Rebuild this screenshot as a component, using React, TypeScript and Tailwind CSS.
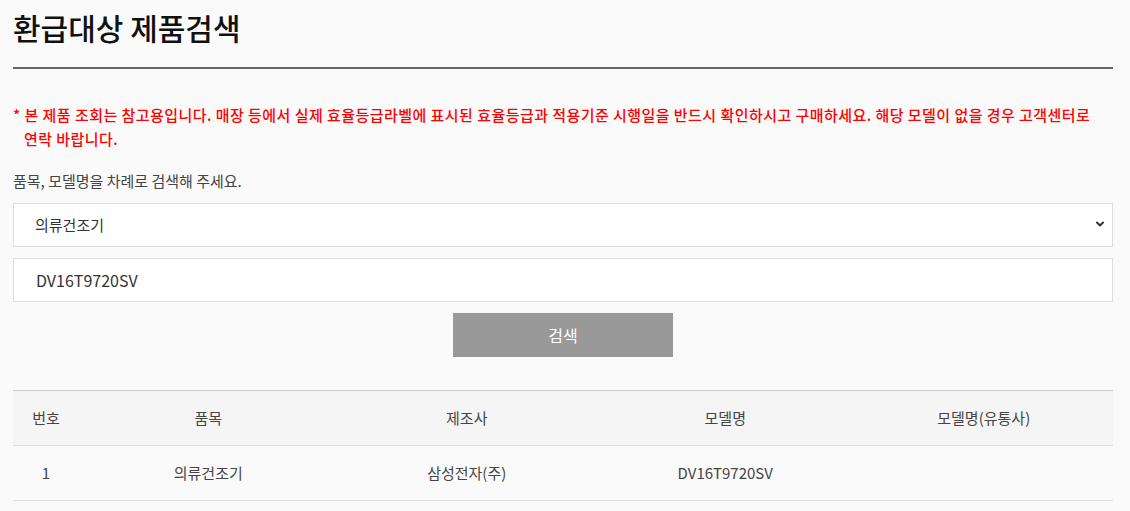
import { ChevronDown } from 'lucide-react';

type Row = {
  no: number;
  category: string;
  maker: string;
  model: string;
  dealerModel: string;
};

const rows: Row[] = [
  { no: 1, category: '의류건조기', maker: '삼성전자(주)', model: 'DV16T9720SV', dealerModel: '' },
];

const font = { fontFamily: '"Noto Sans CJK KR", "Noto Sans", sans-serif' };

const App = () => {
  return (
    <div className="min-h-screen bg-[#fafafa] text-[#333]" style={font}>
      <div className="w-[1100px] ml-[13px]">
        <h1 className="pt-[7px] h-[67px] text-[30px] font-medium text-[#111] leading-[40px]">환급대상 제품검색</h1>
        <div className="h-[2px] bg-[#666]" />

        <p className="mt-[34px] pl-[11px] -indent-[11px] pr-[20px] text-[15px] font-medium tracking-[0.45px] leading-[24px] text-[#ff0000]">
          * 본 제품 조회는 참고용입니다. 매장 등에서 실제 효율등급라벨에 표시된 효율등급과 적용기준 시행일을 반드시 확인하시고 구매하세요. 해당 모델이 없을 경우 고객센터로 연락 바랍니다.
        </p>

        <p className="mt-[19px] text-[15px] leading-[22px] text-[#444]">품목, 모델명을 차례로 검색해 주세요.</p>

        <div className="mt-[11px] relative h-[44px] border border-[#ddd] bg-white flex items-center pl-[21px]">
          <span className="text-[15px] text-[#333]">의류건조기</span>
          <ChevronDown className="absolute right-[6px] top-[14px] w-[12px] h-[12px] text-[#333]" strokeWidth={4} />
        </div>

        <div className="mt-[11px] h-[44px] border border-[#ddd] bg-white flex items-center pl-[22px]">
          <span className="text-[16px] text-[#333]">DV16T9720SV</span>
        </div>

        <div className="mt-[11px] flex justify-center">
          <button className="w-[220px] h-[44px] bg-[#999] text-white text-[16px]">검색</button>
        </div>

        <table className="mt-[33px] w-full table-fixed border-t border-[#ccc] text-[15px] text-[#444]">
          <colgroup>
            <col className="w-[66px]" />
            <col />
            <col />
            <col />
            <col />
          </colgroup>
          <thead>
            <tr className="h-[55px] bg-[#f5f5f5] border-b border-[#ddd]">
              <th className="font-normal">번호</th>
              <th className="font-normal">품목</th>
              <th className="font-normal">제조사</th>
              <th className="font-normal">모델명</th>
              <th className="font-normal">모델명(유통사)</th>
            </tr>
          </thead>
          <tbody>
            {rows.map((r) => (
              <tr key={r.no} className="h-[55px] border-b border-[#ddd]">
                <td className="text-center">{r.no}</td>
                <td className="text-center">{r.category}</td>
                <td className="text-center">{r.maker}</td>
                <td className="text-center">{r.model}</td>
                <td className="text-center">{r.dealerModel}</td>
              </tr>
            ))}
          </tbody>
        </table>
      </div>
    </div>
  );
};

export default App;
